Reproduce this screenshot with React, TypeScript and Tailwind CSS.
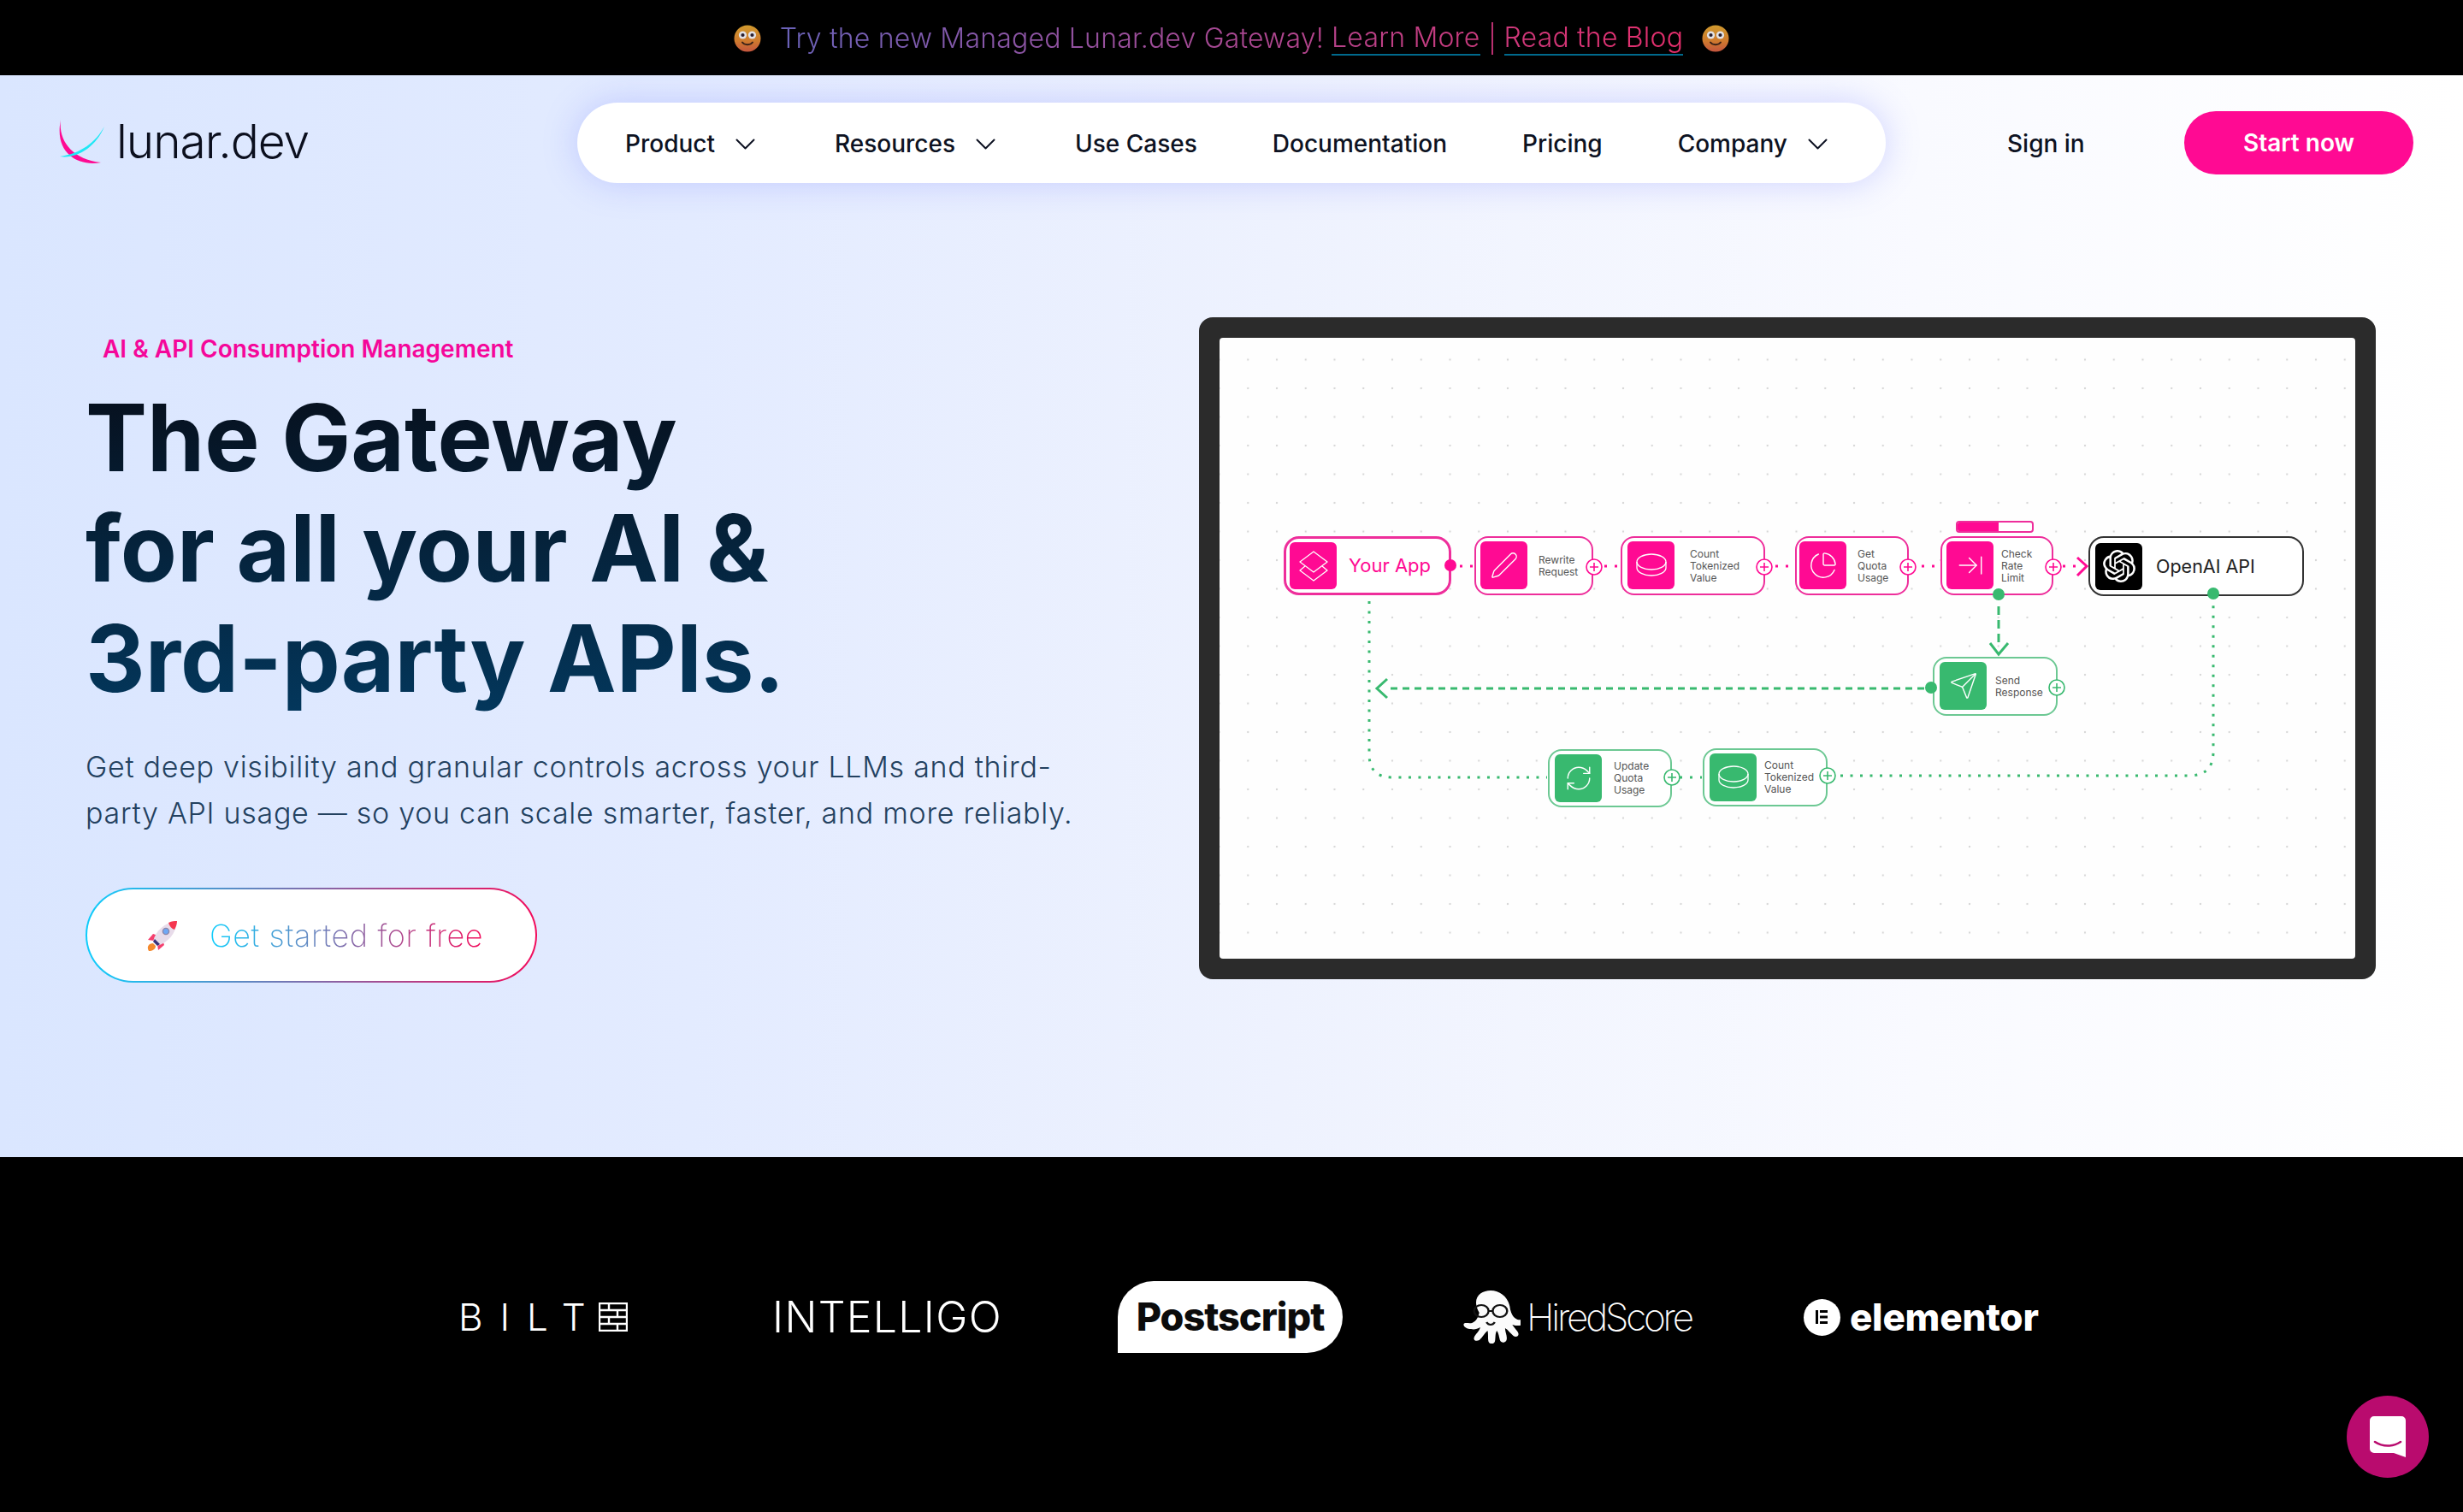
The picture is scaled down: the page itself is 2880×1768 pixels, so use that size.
import React from "react";
import { Pen, ChartPie, ArrowRightToLine, Send, RefreshCw } from "lucide-react";
import { SiOpenai } from "react-icons/si";

const PINK = "#ff0a93";
const GREEN = "#38b96f";

function Smile({ id }: { id: string }) {
  return (
    <svg width="32" height="32" viewBox="0 0 32 32" className="shrink-0">
      <defs>
        <linearGradient id={id} x1="0" y1="0" x2="0" y2="1">
          <stop offset="0" stopColor="#d09a2e" />
          <stop offset="0.6" stopColor="#cf7a2e" />
          <stop offset="1" stopColor="#c4553e" />
        </linearGradient>
      </defs>
      <circle cx="16" cy="16" r="15.5" fill={`url(#${id})`} />
      <circle cx="10.5" cy="12" r="4.6" fill="#e2e2e6" />
      <circle cx="21.5" cy="12" r="4.6" fill="#e2e2e6" />
      <circle cx="10.5" cy="12" r="2.1" fill="#2a2030" />
      <circle cx="21.5" cy="12" r="2.1" fill="#2a2030" />
      <path d="M10 20.500c2.500 3.500 9.500 3.500 12 0" stroke="#3a2218" strokeWidth="2" fill="none" strokeLinecap="round" />
    </svg>
  );
}

function Banner() {
  return (
    <div className="h-[88px] bg-black flex items-center justify-center pt-[2px]">
      <Smile id="s1" />
      <div className="ml-[22px] flex items-center text-[32px] leading-[40px] font-light tracking-[0.2px] text-transparent bg-clip-text bg-[linear-gradient(90deg,#6a62b8,#e62e6c)] whitespace-nowrap">
        <span>Try the new Managed Lunar.dev Gateway!&nbsp;</span>
        <span className="border-b-2 border-[#00698c] leading-[38px]">Learn More</span>
        <span className="mx-[13px] w-[2px] h-[38px] bg-[#b8306f]" />
        <span className="border-b-2 border-[#00698c] leading-[38px]">Read the Blog</span>
      </div>
      <span className="ml-[22px]">
        <Smile id="s2" />
      </span>
    </div>
  );
}

function LogoMark() {
  return (
    <svg width="56" height="54" viewBox="0 0 56 54" className="shrink-0">
      <path d="M3 0C0 24 16 46 50 50C24 55 -5 40 3 0Z" fill={PINK} />
      <path d="M54 8C44 26 26 40 2 43C22 46 44 32 54 8Z" fill="#1fe8f5" />
    </svg>
  );
}

function Caret() {
  return (
    <svg width="23" height="13" viewBox="0 0 23 13" fill="none" stroke="#0d1222" strokeWidth="2" strokeLinecap="round" strokeLinejoin="round" className="ml-[24px] shrink-0">
      <path d="M1.500 1.500 11.500 11.500 21.500 1.500" />
    </svg>
  );
}

function NavItem({ label, caret }: { label: string; caret?: boolean }) {
  return (
    <span className="flex items-center">
      <span>{label}</span>
      {caret && <Caret />}
    </span>
  );
}

function Header() {
  return (
    <header className="h-[158px] flex items-center font-[Inter,sans-serif]">
      <div className="ml-[68px] w-[607px] flex items-center">
        <LogoMark />
        <span className="ml-[12px] mb-[3px] text-[55px] leading-none font-light tracking-[-1px] text-[#0b0f1e]">lunar.dev</span>
      </div>
      <nav className="w-[1530px] h-[94px] rounded-[47px] bg-white shadow-[0_0_40px_rgba(120,130,255,0.32)] pl-[56px] pt-[2px] flex items-center text-[28px] font-medium text-[#0d1222] whitespace-nowrap">
        <NavItem label="Product" caret />
        <span className="ml-[93px]"><NavItem label="Resources" caret /></span>
        <span className="ml-[93px]"><NavItem label="Use Cases" /></span>
        <span className="ml-[88px]"><NavItem label="Documentation" /></span>
        <span className="ml-[88px]"><NavItem label="Pricing" /></span>
        <span className="ml-[88px]"><NavItem label="Company" caret /></span>
      </nav>
      <span className="ml-[142px] pt-[2px] w-[95px] text-[28px] font-medium text-[#0d1222] whitespace-nowrap">Sign in</span>
      <button className="ml-[112px] w-[268px] h-[74px] rounded-[37px] bg-[#ff0a93] text-white text-[28px] font-semibold">Start now</button>
    </header>
  );
}

function Rocket() {
  return (
    <svg width="38" height="36" viewBox="0 0 38 36" className="shrink-0">
      <path d="M4 36c-3-5 0-9 5-9l3 3c0 4-4 6-8 6Z" fill="#f58a2e" />
      <path d="M10 24 3 23l6-7 6 2Z" fill="#f43f6e" />
      <path d="M14 28l1 7 7-6-2-6Z" fill="#f43f6e" />
      <path d="M9 25C12 12 22 3 37 1c-1 15-11 25-23 29Z" fill="#e8dcea" />
      <path d="M27 3c4-2 7-2 10-2 0 3-1 6-3 10-3-1-6-4-7-8Z" fill="#f5364f" />
      <circle cx="24" cy="13" r="3.6" fill="#6fa8f5" stroke="#8d86a8" strokeWidth="1.4" />
      <path d="M9 25l5 5 3-2-6-6Z" fill="#38307a" />
    </svg>
  );
}

function Copy() {
  return (
    <div className="w-[1402px] shrink-0 pl-[100px] pt-[19px] font-[Inter,sans-serif]">
      <div className="pl-[20px] text-[28px] leading-[36px] font-semibold text-[#f5079a]">AI &amp; API Consumption Management</div>
      <h1 className="mt-[21px] text-[108px] leading-[129px] font-bold tracking-[0px] text-transparent bg-clip-text bg-[linear-gradient(180deg,#070f1c,#03375c)] w-fit whitespace-nowrap">
        The Gateway
        <br />
        for all your AI &amp;
        <br />
        3rd-party APIs.
      </h1>
      <p className="mt-[36px] text-[34px] leading-[54px] font-light tracking-[0.72px] text-[#23415f] whitespace-nowrap">
        Get deep visibility and granular controls across your LLMs and third-
        <br />
        party API usage — so you can scale smarter, faster, and more reliably.
      </p>
      <div className="mt-[60px] w-[528px] h-[111px] rounded-[56px] p-[2px] bg-[linear-gradient(90deg,#0dcdfc,#f30b5b)]">
        <div className="h-full rounded-[54px] bg-white flex items-center pl-[68px]">
          <Rocket />
          <span className="ml-[37px] text-[36px] font-extralight text-transparent bg-clip-text bg-[linear-gradient(90deg,#0dcdfc,#f30b5b)] tracking-[0.6px]">
            Get started for free
          </span>
        </div>
      </div>
    </div>
  );
}

type NodeData = { x: number; y: number; w: number; h: number; c: "p" | "g"; icon: React.ReactNode; lines: string[]; ix: number; tx: number };

function Coin() {
  return (
    <svg width="36" height="30" viewBox="0 0 36 30" fill="none" stroke="#fff" strokeWidth="1.3">
      <ellipse cx="18" cy="11" rx="17" ry="9" />
      <path d="M1 11v7c0 5 8 9 17 9s17-4 17-9v-7" />
    </svg>
  );
}
function Layers() {
  return (
    <svg width="38" height="38" viewBox="0 0 38 38" fill="none" stroke="#fff" strokeWidth="1.3" strokeLinejoin="round">
      <path d="M19 2 35 14 19 26 3 14Z" />
      <path d="M9 19 3 24 19 36 35 24 29 19" />
    </svg>
  );
}

const lucideProps = { size: 34, color: "#fff", strokeWidth: 1 };

const nodes: NodeData[] = [
  { x: 1724, y: 625, w: 139, h: 69, c: "p", icon: <Pen {...lucideProps} />, lines: ["Rewrite", "Request"], ix: 1731, tx: 1799 },
  { x: 1895, y: 625, w: 169, h: 69, c: "p", icon: <Coin />, lines: ["Count", "Tokenized", "Value"], ix: 1903, tx: 1976 },
  { x: 2099, y: 625, w: 133, h: 69, c: "p", icon: <ChartPie {...lucideProps} />, lines: ["Get", "Quota", "Usage"], ix: 2104, tx: 2172 },
  { x: 2269, y: 625, w: 132, h: 69, c: "p", icon: <ArrowRightToLine {...lucideProps} />, lines: ["Check", "Rate", "Limit"], ix: 2276, tx: 2340 },
  { x: 2260, y: 766, w: 146, h: 69, c: "g", icon: <Send {...lucideProps} />, lines: ["Send", "Response"], ix: 2268, tx: 2333 },
  { x: 1810, y: 874, w: 145, h: 68, c: "g", icon: <RefreshCw {...lucideProps} />, lines: ["Update", "Quota", "Usage"], ix: 1818, tx: 1887 },
  { x: 1991, y: 873, w: 146, h: 68, c: "g", icon: <Coin />, lines: ["Count", "Tokenized", "Value"], ix: 1999, tx: 2063 },
];

const OX = 1426;
const OY = 393;

function FlowNode({ n }: { n: NodeData }) {
  const border = n.c === "p" ? "border-[#ee2e9b]" : "border-[#6cc893]";
  const fill = n.c === "p" ? "bg-[#ff0a93]" : "bg-[#38b96f]";
  return (
    <div
      className={`absolute flex items-center rounded-[16px] border-2 bg-white ${border}`}
      style={{ left: n.x - OX, top: n.y - OY, width: n.w, height: n.h }}
    >
      <div
        className={`absolute top-[4px] w-[55px] h-[56px] rounded-[6px] flex items-center justify-center ${fill}`}
        style={{ left: n.ix - n.x - 2 }}
      >
        {n.icon}
      </div>
      <div
        className="absolute text-[12px] leading-[14px] text-[#555] whitespace-nowrap"
        style={{ left: n.tx - n.x - 2 }}
      >
        {n.lines.map((l) => (
          <div key={l}>{l}</div>
        ))}
      </div>
    </div>
  );
}

function Plus({ x, y, c }: { x: number; y: number; c: string }) {
  return (
    <g stroke={c} strokeWidth="1.6" fill="#fff">
      <circle cx={x} cy={y} r="9" />
      <path d={`M${x - 5} ${y}h10M${x} ${y - 5}v10`} fill="none" />
    </g>
  );
}

function Overlay() {
  return (
    <svg className="absolute inset-0 z-10 pointer-events-none" width="1328" height="726" viewBox="1426 393 1328 726" fill="none">
      <circle cx="1696" cy="659" r="7" fill={PINK} />
      <Plus x={1864} y={661} c={PINK} />
      <Plus x={2063} y={661} c={PINK} />
      <Plus x={2231} y={661} c={PINK} />
      <Plus x={2401} y={661} c={PINK} />
      <Plus x={2405} y={802} c={GREEN} />
      <Plus x={1955} y={907} c={GREEN} />
      <Plus x={2137} y={905} c={GREEN} />
      <circle cx="2337" cy="693" r="7" fill={GREEN} />
      <circle cx="2588" cy="692" r="7" fill={GREEN} />
      <circle cx="2258" cy="802" r="7" fill={GREEN} />
    </svg>
  );
}

function Edges() {
  return (
    <svg className="absolute inset-0" width="1328" height="726" viewBox="1426 393 1328 726" fill="none">
      <g stroke={PINK} strokeWidth="3" strokeDasharray="3 9">
        <path d="M1707 660H1722" />
        <path d="M1876 660H1894" />
        <path d="M2076 660H2098" />
        <path d="M2247 660H2268" />
        <path d="M2412 660H2430" />
      </g>
      <path d="M2429 650 2440 660 2429 671" stroke={PINK} strokeWidth="3" />
      <g stroke={GREEN} strokeWidth="3">
        <path d="M2337 707V750" strokeDasharray="10 6" />
        <path d="M2327 750 2337 763 2348 750" />
        <path d="M2250 803H1624" strokeDasharray="8 6" />
        <path d="M1622 792 1610 803 1622 814" />
        <path d="M1601 701V880Q1601 907 1628 907H1809" strokeDasharray="3 8.5" />
        <path d="M1964 907H1990" strokeDasharray="3 9" />
        <path d="M2152 905H2560Q2588 905 2588 877V704" strokeDasharray="3 8.5" />
      </g>
    </svg>
  );
}

function Diagram() {
  return (
    <div className="w-[1376px] h-[774px] rounded-[16px] bg-[#2b2b2b] p-[24px] shrink-0">
      <div className="relative w-[1328px] h-[726px] rounded-[4px] bg-[#fefefe] text-[#333] font-[Inter,sans-serif] bg-[radial-gradient(circle,#d8d8d8_1.1px,transparent_1.6px)] bg-[size:33.75px_33.5px] bg-[position:-17.4px_8.75px]">
        <Edges />
        <div className="absolute left-[75px] top-[232px] w-[196px] h-[69px] rounded-[18px] border-[3px] border-[#ee2e9b] bg-white flex items-center pl-[4px]">
          <div className="w-[55px] h-[55px] rounded-[6px] bg-[#ff0a93] flex items-center justify-center shrink-0">
            <Layers />
          </div>
          <span className="ml-[14px] text-[22px] text-[#ff0a93] whitespace-nowrap">Your App</span>
        </div>
        {nodes.map((n) => (
          <FlowNode key={n.x} n={n} />
        ))}
        <div className="absolute left-[861px] top-[214px] w-[91px] h-[14px] rounded-[4px] border-2 border-[#ee2e9b] bg-white overflow-hidden">
          <div className="w-[48px] h-full bg-[#ff0a93]" />
        </div>
        <div className="absolute left-[1016px] top-[232px] w-[252px] h-[70px] rounded-[18px] border-[2px] border-[#333] bg-white flex items-center pl-[6px]">
          <div className="w-[55px] h-[55px] rounded-[6px] bg-black flex items-center justify-center shrink-0">
            <SiOpenai size={38} color="#fff" />
          </div>
          <span className="ml-[16px] text-[21.500px] text-[#222] whitespace-nowrap">OpenAI API</span>
        </div>
        <Overlay />
      </div>
    </div>
  );
}

function Octopus() {
  return (
    <svg width="70" height="62" viewBox="5 0 58 62" preserveAspectRatio="none" className="shrink-0">
      <path
        fill="#fbfbfb"
        d="M34 0c10 0 18 9 19 22 1 5 3 10 7 12 3 1 7-1 8 1 1 3-3 6-7 6-2 0-4 0-6-1 2 4 6 8 6 11 0 3-3 4-5 2-3-3-5-7-8-9 0 5 3 11 1 15-2 3-5 2-6-1-1-4-1-8-3-11-2 4-1 10-2 13-1 3-5 3-6 0-1-4 0-9-1-13-3 3-5 8-8 11-3 2-6 0-5-3 1-4 5-7 6-12-3 2-6 3-9 2-4 0-8-3-7-6 1-2 5 0 8-1 4-2 6-7 7-12C15 9 24 0 34 0Z"
      />
      <g fill="none" stroke="#111" strokeWidth="2">
        <circle cx="25" cy="24" r="7" />
        <circle cx="43" cy="24" r="7" />
        <path d="M32 24h4M30 37c2 4 6 4 8 0" />
      </g>
    </svg>
  );
}

function Logos() {
  return (
    <div className="h-[415px] bg-black pt-[145px] relative">
      <div className="flex items-center h-[84px] pl-[536px] text-white font-[Inter,sans-serif] whitespace-nowrap">
        <span className="w-[164px] shrink-0 text-[44px] leading-none font-light tracking-[20px]">BILT</span>
        <svg width="34" height="34" viewBox="0 0 34 34" className="shrink-0" fill="none" stroke="#fff" strokeWidth="2.4">
          <path d="M1 1h32v32H1ZM1 9h32M1 17h32M1 25h32M12 1v8M22 9v8M12 17v8M22 25v8" />
        </svg>
        <span className="ml-[169px] w-[268px] shrink-0 text-[50px] leading-none font-light tracking-[1.3px]">INTELLIGO</span>
        <div className="ml-[136px] w-[263px] h-[84px] shrink-0 bg-white rounded-[42px] rounded-bl-none flex items-center justify-center">
          <span className="text-[45px] font-extrabold text-[#0b0b0b] tracking-[-1px]">Postscript</span>
        </div>
        <div className="ml-[138px] flex items-center shrink-0">
          <Octopus />
          <span className="ml-[7px] text-[44px] font-extralight tracking-[-3.2px]">HiredScore</span>
        </div>
        <div className="ml-[131px] w-[43px] h-[43px] rounded-full bg-white flex items-center justify-center shrink-0">
          <svg width="20" height="20" viewBox="0 0 20 20" fill="#000">
            <path d="M3 2h3v16H3ZM8 2h9v3H8ZM8 8.500h9v3H8ZM8 15h9v3H8Z" />
          </svg>
        </div>
        <span className="ml-[11px] text-[44px] font-extrabold tracking-[-0.2px]">elementor</span>
      </div>
      <div className="absolute right-[40px] bottom-[40px] w-[96px] h-[96px] rounded-full bg-[#b90b6e] flex items-center justify-center">
        <svg width="42" height="48" viewBox="0 0 42 48">
          <path
            fill="#fff"
            d="M5 0h32a5 5 0 0 1 5 5v43l-14-5H5a5 5 0 0 1-5-5V5a5 5 0 0 1 5-5Z"
          />
          <path d="M6 30c9 6 21 6 30 0" stroke="#b90b6e" strokeWidth="2.6" fill="none" strokeLinecap="round" />
        </svg>
      </div>
    </div>
  );
}

export default function App() {
  return (
    <div className="w-[2880px] h-[1768px] overflow-hidden font-[Inter,sans-serif]">
      <Banner />
      <div className="h-[1265px] bg-[linear-gradient(to_right,#dae6ff_0%,#e3ebff_28%,#eef2fe_52%,#f9faff_78%,#ffffff_100%)]">
        <Header />
        <div className="flex items-start pt-[125px]">
          <Copy />
          <Diagram />
        </div>
      </div>
      <Logos />
    </div>
  );
}
